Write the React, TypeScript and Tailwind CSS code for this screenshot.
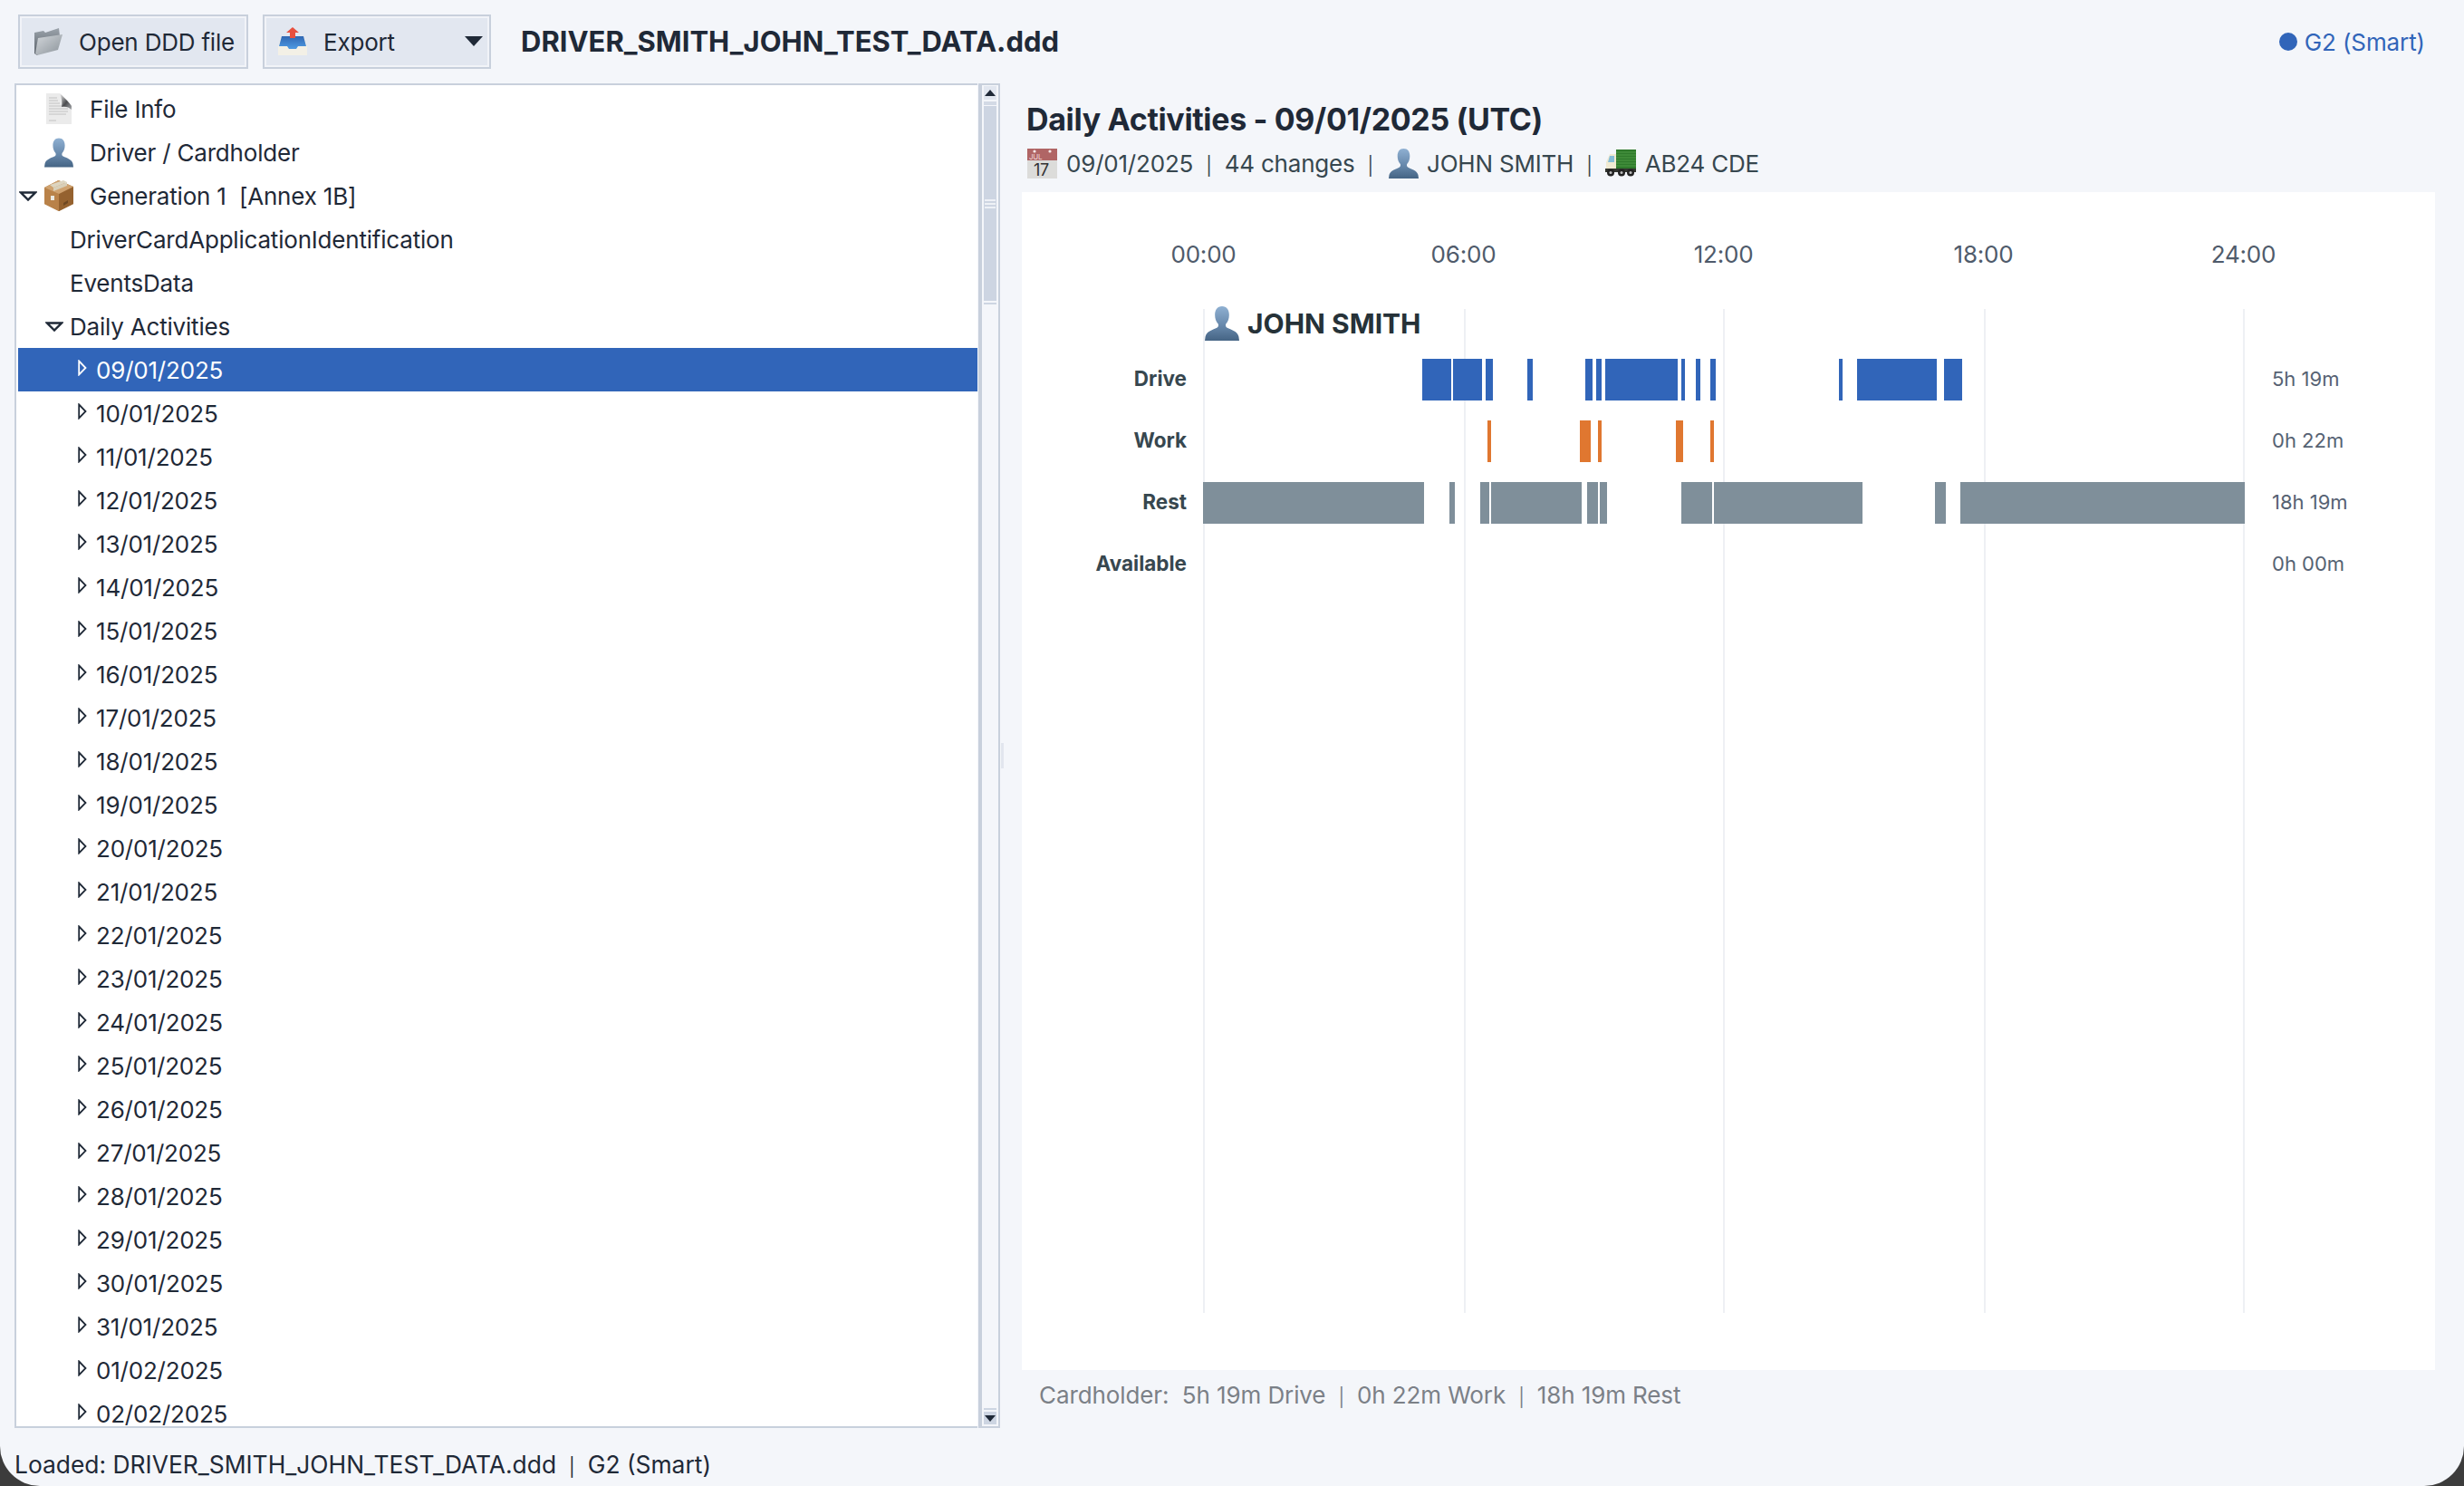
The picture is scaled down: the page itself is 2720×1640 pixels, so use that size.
import React from 'react';

type Span = [number, number];

const DATES = [
  '09/01/2025', '10/01/2025', '11/01/2025', '12/01/2025', '13/01/2025', '14/01/2025', '15/01/2025', '16/01/2025',
  '17/01/2025', '18/01/2025', '19/01/2025', '20/01/2025', '21/01/2025', '22/01/2025', '23/01/2025', '24/01/2025',
  '25/01/2025', '26/01/2025', '27/01/2025', '28/01/2025', '29/01/2025', '30/01/2025', '31/01/2025', '01/02/2025',
  '02/02/2025',
];

const LANES: { label: string; total: string; color: string; spans: Span[] }[] = [
  {
    label: 'Drive',
    total: '5h 19m',
    color: '#3165b9',
    spans: [[242, 274], [276, 308], [312, 320], [358, 364], [422, 430], [434, 440], [444, 524], [528, 532], [544, 549], [560, 566], [702, 706], [722, 810], [818, 838]],
  },
  {
    label: 'Work',
    total: '0h 22m',
    color: '#e07730',
    spans: [[314, 318], [416, 428], [436, 440], [522, 530], [560, 564]],
  },
  {
    label: 'Rest',
    total: '18h 19m',
    color: '#7f8f9a',
    spans: [[0, 244], [272, 278], [306, 316], [318, 418], [424, 436], [438, 446], [528, 562], [564, 728], [808, 820], [836, 1150]],
  },
  { label: 'Available', total: '0h 00m', color: '#7f8f9a', spans: [] },
];

const HOURS = ['00:00', '06:00', '12:00', '18:00', '24:00'];
const GRID_X = [0, 288, 574, 862, 1148];

const Sep = () => <span className="mx-[14px] text-[20px]">|</span>;

const PersonIcon = ({ className, id }: { className: string; id: string }) => (
  <svg viewBox="0 0 32 32" className={className}>
    <defs>
      <linearGradient id={id} x1="0" y1="0" x2="0" y2="1">
        <stop offset="0" stopColor="#8fb0d2" />
        <stop offset="0.6" stopColor="#6485a8" />
        <stop offset="1" stopColor="#456484" />
      </linearGradient>
    </defs>
    <path
      d="M16 0c4.400 0 6.600 3.400 6.600 8 0 3.400-1.100 6.600-3 8.400-.5 1.300-.3 2.800 1.200 3.600 3.400 1.800 9.700 3.200 10.700 8.200L32 32H0l.5-3.800c1-5 7.300-6.400 10.700-8.200 1.500-.8 1.700-2.300 1.200-3.600-1.900-1.800-3-5-3-8.400 0-4.600 2.200-8 6.600-8z"
      fill={`url(#${id})`}
    />
  </svg>
);

const FileIcon = () => (
  <svg viewBox="0 0 28 34" className="w-[28px] h-[34px]">
    <defs>
      <linearGradient id="fold" x1="0" y1="0" x2="1" y2="1">
        <stop offset="0" stopColor="#f2f2f2" />
        <stop offset="0.55" stopColor="#4c4d50" />
        <stop offset="1" stopColor="#a8aaad" />
      </linearGradient>
    </defs>
    <path d="M0 0h15l13 14v20H0z" fill="#ebebeb" />
    <path d="M3 5h9M3 8h10M3 11h12M3 14h15M3 17h21M3 20h21M3 23h19M3 30h8" stroke="#c2c2c2" strokeWidth="1" />
    <path d="M15 0c3 3 9 8 13 14v4c-3-3-7-4-11-3 1-5 0-10-2-15z" fill="url(#fold)" />
  </svg>
);

const BoxIcon = () => (
  <svg viewBox="0 0 32 34" className="w-[32px] h-[34px]">
    <path d="M15.500 0L32 7v19l-16 8-16-8V8z" fill="#a9733f" />
    <path d="M0 8l16 7v19L0 26z" fill="#b98249" />
    <path d="M16 15l16-8v19l-16 8z" fill="#95622f" />
    <path d="M0 8l15.500-8L32 7l-16 8z" fill="#cfa26f" />
    <path d="M6 5l15-5 4 2-15 6z" fill="#ddd5c0" />
    <path d="M10 8l15-6v4l-15 6z" fill="#d8cfb8" />
    <rect x="7" y="17" width="4" height="5" fill="#eae8e0" />
    <path d="M21 25l5-3v3l-5 3z" fill="#6f4822" />
  </svg>
);

const FolderIcon = () => (
  <svg viewBox="0 0 32 30" className="w-[32px] h-[30px]">
    <defs>
      <linearGradient id="folderBack" x1="0" y1="0" x2="0" y2="1">
        <stop offset="0" stopColor="#9ba3ab" />
        <stop offset="1" stopColor="#596068" />
      </linearGradient>
      <linearGradient id="folderFront" x1="0" y1="0" x2="1" y2="1">
        <stop offset="0" stopColor="#d4d8dc" />
        <stop offset="1" stopColor="#8a9299" />
      </linearGradient>
    </defs>
    <path d="M1 5l10-2 2 2 15-5 1 9L4 30 1 28z" fill="url(#folderBack)" />
    <path d="M5 11l27-4-5 17-23 6-2-2z" fill="url(#folderFront)" />
  </svg>
);

const ExportIcon = () => (
  <svg viewBox="0 0 32 32" className="w-[32px] h-[32px]">
    <defs>
      <linearGradient id="tray" x1="0" y1="0" x2="0" y2="1">
        <stop offset="0" stopColor="#2f67b3" />
        <stop offset="1" stopColor="#4f9be3" />
      </linearGradient>
    </defs>
    <path d="M3 12h26l3 10v9H0v-9z" fill="#f3f0e6" />
    <path d="M4 10h24l3 11H22l-2 3h-8l-2-3H1z" fill="url(#tray)" />
    <path d="M16 0l7 6h-4v6h-6V6H9z" fill="#e8503f" />
  </svg>
);

const CalendarIcon = () => (
  <svg viewBox="0 0 33 33" className="w-[33px] h-[33px]">
    <rect width="33" height="33" fill="#dcdcda" />
    <rect width="33" height="13" fill="#b06565" />
    <circle cx="8" cy="3" r="1.600" fill="#f5e8e8" />
    <circle cx="25" cy="3" r="1.600" fill="#f5e8e8" />
    <text x="2" y="12" fontSize="8" fontFamily="Inter, sans-serif" fill="#f0d8d8">JUL</text>
    <text x="7" y="30" fontSize="18" fontFamily="Inter, sans-serif" fill="#333">17</text>
  </svg>
);

const TruckIcon = () => (
  <svg viewBox="0 0 34 30" className="w-[34px] h-[30px]">
    <rect x="12" y="0" width="22" height="22" fill="#2f7a2c" />
    <path d="M12 3h22M12 6h22M12 9h22M12 12h22M12 15h22M12 18h22" stroke="#4f9a45" strokeWidth="1" />
    <path d="M12 5H5L1 14v9h11z" fill="#f0ead2" />
    <path d="M5 7h5v7H3z" fill="#86bdd8" />
    <rect x="0" y="21" width="34" height="4" fill="#33352f" />
    <circle cx="6" cy="25.500" r="4" fill="#222" />
    <circle cx="6" cy="25.500" r="1.500" fill="#bbb" />
    <circle cx="18" cy="25.500" r="4" fill="#222" />
    <circle cx="18" cy="25.500" r="1.500" fill="#bbb" />
    <circle cx="28" cy="25.500" r="4" fill="#222" />
    <circle cx="28" cy="25.500" r="1.500" fill="#bbb" />
  </svg>
);

const ArrowDown = () => (
  <svg viewBox="0 0 20 11" className="w-[20px] h-[11px]">
    <path d="M2 1.500h16L10 9.500z" fill="none" stroke="#1f2937" strokeWidth="2.400" />
  </svg>
);

const ArrowRight = ({ light }: { light?: boolean }) => (
  <svg viewBox="0 0 10 18" className="w-[10px] h-[18px] -mt-[4px]">
    <path d="M1.200 1.500L8.500 9l-7.300 7.500z" fill="none" stroke={light ? '#ffffff' : '#1f2937'} strokeWidth="1.800" />
  </svg>
);

const TopRow = ({ icon, arrow, label }: { icon: React.ReactNode; arrow?: boolean; label: string }) => (
  <div className="flex items-center h-12">
    <div className="w-[29px] flex justify-end pr-[8px]">{arrow && <ArrowDown />}</div>
    <div className="w-[32px] flex justify-center mr-[18px]">{icon}</div>
    <span className="whitespace-pre">{label}</span>
  </div>
);

const ChildRow = ({ arrow, label }: { arrow?: boolean; label: string }) => (
  <div className="flex items-center h-12">
    <div className="w-[57px] flex justify-end pr-[7px]">{arrow && <ArrowDown />}</div>
    <span>{label}</span>
  </div>
);

const DateRow = ({ date, selected }: { date: string; selected?: boolean }) => (
  <div className={selected ? 'flex items-center h-12 bg-[#3165b9] text-white' : 'flex items-center h-12'}>
    <div className="w-[86px] flex justify-end pr-[10px]">
      <ArrowRight light={selected} />
    </div>
    <span>{date}</span>
  </div>
);

const ScrollBar = () => (
  <div className="w-[24px] flex flex-col border-2 border-l-4 border-[#c8d0dc] bg-[#f4f6fa] px-[2px] pt-[1px] pb-[2px]">
    <div className="h-[15px] bg-[#e2e7f0] flex items-center justify-center">
      <div className="w-0 h-0 border-x-[6px] border-x-transparent border-b-[7px] border-b-[#1f2937]" />
    </div>
    <div className="h-[4px] mt-[2px] bg-[#d3dae5]" />
    <div className="h-[215px] mt-[1px] bg-[#cdd5e2] flex flex-col items-center justify-center gap-[2px]">
      <div className="w-[12px] h-[2px] bg-[#eef1f6]" />
      <div className="w-[12px] h-[2px] bg-[#eef1f6]" />
      <div className="w-[12px] h-[2px] bg-[#eef1f6]" />
    </div>
    <div className="h-[2px] mt-[2px] bg-[#cdd5e2]" />
    <div className="flex-1" />
    <div className="h-[2px] bg-[#cdd5e2]" />
    <div className="h-[14px] mt-[2px] bg-[#cdd5e2] flex items-center justify-center">
      <div className="w-0 h-0 border-x-[6px] border-x-transparent border-t-[7px] border-t-[#1f2937]" />
    </div>
  </div>
);

const TreePanel = () => (
  <div className="flex w-[1088px] h-full">
    <div className="w-[1063px] mr-[1px] border-y-2 border-l-2 border-[#c8d0dc] bg-white pt-[2px] pl-[2px] overflow-hidden text-[26px] tracking-[-0.2px] text-[#1f2937]">
      <TopRow icon={<FileIcon />} label="File Info" />
      <TopRow icon={<PersonIcon id="personTree" className="w-[33px] h-[33px]" />} label="Driver / Cardholder" />
      <TopRow icon={<BoxIcon />} arrow label="Generation 1  [Annex 1B]" />
      <ChildRow label="DriverCardApplicationIdentification" />
      <ChildRow label="EventsData" />
      <ChildRow arrow label="Daily Activities" />
      {DATES.map((d, i) => (
        <DateRow key={d} date={d} selected={i === 0} />
      ))}
    </div>
    <ScrollBar />
  </div>
);

const Chart = () => (
  <div className="h-[1300px] bg-white pt-[49px]">
    <div className="grid grid-cols-5 w-[1435px] ml-[57px] h-[32px] items-center text-center text-[26px] tracking-[-0.2px] text-[#4f5b6b]">
      {HOURS.map((h) => (
        <span key={h}>{h}</span>
      ))}
    </div>
    <div className="relative mt-[48px] h-[1108px]">
      {GRID_X.map((x) => (
        <div key={x} className="absolute top-0 bottom-0 ml-[200px] w-[2px] bg-[#eef0f4]" style={{ left: x }} />
      ))}
      <div className="relative flex items-center h-[55px] pl-[202px] pb-[23px]">
        <PersonIcon id="personChart" className="w-[38px] h-[38px]" />
        <span className="ml-[9px] text-[30px] font-bold text-[#263238]">JOHN SMITH</span>
      </div>
      <div className="relative flex flex-col gap-[22px]">
        {LANES.map((lane) => (
          <div key={lane.label} className="flex items-center h-[46px]">
            <span className="w-[182px] pb-[2px] text-right text-[22.5px] font-bold text-[#37474f]">{lane.label}</span>
            <div className="relative w-[1150px] h-full ml-[18px]">
              {lane.spans.map(([a, b]) => (
                <div
                  key={a}
                  className="absolute top-0 bottom-0"
                  style={{ left: a, width: b - a, backgroundColor: lane.color }}
                />
              ))}
            </div>
            <span className="ml-[30px] pb-[1px] text-[22px] text-[#566273]">{lane.total}</span>
          </div>
        ))}
      </div>
    </div>
  </div>
);

const DetailPanel = () => (
  <div className="w-[1560px] h-full flex flex-col">
    <h1 className="h-[69px] pt-[20px] pl-[5px] text-[34px] leading-[40px] tracking-[-0.35px] font-bold text-[#1f2937]">
      Daily Activities - 09/01/2025 (UTC)
    </h1>
    <div className="h-[40px] mb-[11px] -mt-[1px] flex items-center pl-[6px] text-[26px] tracking-[-0.2px] text-[#37474f] whitespace-pre">
      <CalendarIcon />
      <span className="ml-[10px]">09/01/2025<Sep />44 changes<Sep /></span>
      <PersonIcon id="personHead" className="w-[33px] h-[33px] ml-[3px]" />
      <span className="ml-[9px]">JOHN SMITH<Sep /></span>
      <TruckIcon />
      <span className="ml-[10px]">AB24 CDE</span>
    </div>
    <div className="mt-[1px]">
      <Chart />
    </div>
    <p className="mt-[12px] pl-[19px] text-[26px] leading-[32px] tracking-[-0.1px] text-[#7b8087] whitespace-pre">
      Cardholder:  5h 19m Drive<Sep />0h 22m Work<Sep />18h 19m Rest
    </p>
  </div>
);

export default function App() {
  return (
    <div className="w-[2720px] h-[1640px] bg-[#3c3c3c] font-[Inter,sans-serif]">
      <div className="w-full h-full flex flex-col bg-[#f4f6fa] rounded-b-[44px] overflow-hidden">
        <div className="h-[92px] shrink-0 flex pt-[16px] pl-[20px] pr-[43px]">
          <div className="flex items-center gap-[18px] w-[254px] h-[60px] pl-[15px] border-2 border-[#c8d0dc] bg-[#e2e7f0] shadow-[inset_0_0_0_2px_#f1f3f8] text-[26px] tracking-[-0.2px] text-[#1f2937]">
            <FolderIcon />
            <span>Open DDD file</span>
          </div>
          <div className="relative flex items-center gap-[18px] w-[252px] h-[60px] ml-[16px] pl-[15px] border-2 border-[#c8d0dc] bg-[#e2e7f0] shadow-[inset_0_0_0_2px_#f1f3f8] text-[26px] tracking-[-0.2px] text-[#1f2937]">
            <ExportIcon />
            <span>Export</span>
            <div className="absolute right-[7px] top-[22px] w-0 h-0 border-x-[10px] border-x-transparent border-t-[11px] border-t-[#1f2937]" />
          </div>
          <div className="ml-[33px] h-[60px] flex items-center text-[31px] font-bold text-[#1f2937]">
            DRIVER_SMITH_JOHN_TEST_DATA.ddd
          </div>
          <div className="ml-auto h-[60px] flex items-center gap-[8px] text-[26px] tracking-[-0.1px] text-[#3165b9]">
            <div className="w-[20px] h-[20px] rounded-full bg-[#3165b9]" />
            <span>G2 (Smart)</span>
          </div>
        </div>
        <div className="flex h-[1484px] pl-[16px]">
          <TreePanel />
          <div className="w-[24px] flex items-center pl-[1px]">
            <div className="w-[3px] h-[28px] bg-[#e2e6ee]" />
          </div>
          <DetailPanel />
        </div>
        <div className="pl-[16px] pt-[24px] text-[26.4px] leading-[32px] text-[#1f2937] whitespace-pre">
          Loaded: DRIVER_SMITH_JOHN_TEST_DATA.ddd<Sep />G2 (Smart)
        </div>
      </div>
    </div>
  );
}
